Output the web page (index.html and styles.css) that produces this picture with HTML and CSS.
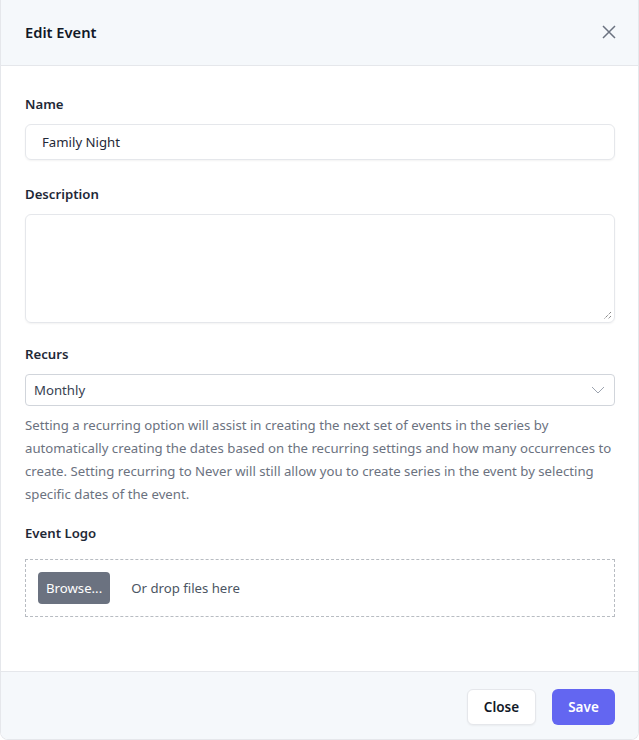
FILE: index.html
```html
<!DOCTYPE html>
<html>
<head>
<meta charset="utf-8">
<link rel="stylesheet" href="styles.css">
</head>
<body>
<div class="modal">
  <div class="modal-header">
    <h1 class="title">Edit Event</h1>
    <button class="close-x" aria-label="Close">
      <svg width="14" height="14" viewBox="0 0 14 14"><path d="M1 1L13 13M13 1L1 13" stroke="#6b7280" stroke-width="1.5" fill="none"/></svg>
    </button>
  </div>
  <div class="modal-body">
    <div class="field field-name">
      <label class="label">Name</label>
      <div class="input">Family Night</div>
    </div>
    <div class="field field-desc">
      <label class="label">Description</label>
      <div class="textarea">
        <svg class="grip" width="9" height="9" viewBox="0 0 9 9"><path d="M8 1L1 8M8 5L5 8" stroke="#555" stroke-width="1" stroke-dasharray="1 1" fill="none"/></svg>
      </div>
    </div>
    <div class="field field-recurs">
      <label class="label">Recurs</label>
      <div class="select">
        <span>Monthly</span>
        <svg width="14" height="8" viewBox="0 0 14 8"><path d="M1 1L7 7L13 1" stroke="#9ca3af" stroke-width="1" fill="none"/></svg>
      </div>
      <p class="help">Setting a recurring option will assist in creating the next set of events in the series by automatically creating the dates based on the recurring settings and how many occurrences to create. Setting recurring to Never will still allow you to create series in the event by selecting specific dates of the event.</p>
    </div>
    <div class="field">
      <label class="label label-logo">Event Logo</label>
      <div class="dropzone">
        <span class="browse">Browse...</span>
        <span class="drop-text">Or drop files here</span>
      </div>
    </div>
  </div>
  <div class="modal-footer">
    <button class="btn btn-light">Close</button>
    <button class="btn btn-primary">Save</button>
  </div>
</div>
</body>
</html>
```

FILE: styles.css
```css
* { box-sizing: border-box; }
html, body { margin: 0; padding: 0; background: #fff; }
body {
  font-family: "Noto Sans", "Open Sans", sans-serif;
  font-size: 13.2px;
  color: #1f2937;
}
.modal {
  width: 639px;
  height: 740px;
  border: 1px solid #e5e7eb;
  border-top: none;
  border-radius: 0 0 8px 8px;
  display: flex;
  flex-direction: column;
  overflow: hidden;
  background: #fff;
}
.modal-header {
  height: 66px;
  background: #f5f8fb;
  border-bottom: 1px solid #e5e7eb;
  display: flex;
  align-items: center;
  justify-content: space-between;
  padding: 0 22px 0 24px;
}
.title {
  margin: 0 0 2px;
  font-size: 14.7px;
  font-weight: 600;
  color: #111827;
}
.close-x {
  border: none;
  background: none;
  padding: 0;
  display: flex;
  margin-bottom: 2px;
}
.modal-body {
  flex: 1;
  padding: 28px 23px 0 24px;
  display: flex;
  flex-direction: column;
}
.field { display: flex; flex-direction: column; }
.field-name { margin-bottom: 24px; }
.field-desc { margin-bottom: 21px; }
.field-recurs { margin-bottom: 17px; }
.label {
  font-size: 13.2px;
  font-weight: 600;
  color: #1f2937;
  line-height: 20px;
  margin-bottom: 10px;
}
.label-logo { margin-bottom: 16px; }
.input {
  height: 36px;
  border: 1px solid #e5e7eb;
  border-radius: 6px;
  box-shadow: 0 1px 2px rgba(0,0,0,0.05);
  padding: 0 16px;
  display: flex;
  align-items: center;
  color: #1f2937;
}
.textarea {
  height: 109px;
  border: 1px solid #e5e7eb;
  border-radius: 6px;
  box-shadow: 0 1px 2px rgba(0,0,0,0.05);
  position: relative;
}
.grip { position: absolute; right: 2px; bottom: 2px; }
.select {
  height: 32px;
  border: 1px solid #d1d5db;
  border-radius: 4px;
  padding: 0 9px 0 8px;
  display: flex;
  align-items: center;
  justify-content: space-between;
  color: #374151;
}
.help {
  margin: 8px 0 0;
  font-size: 13.2px;
  line-height: 23px;
  color: #6b7280;
}
.dropzone {
  height: 58px;
  border: 1px dashed #b8bcc2;
  display: flex;
  align-items: center;
  padding: 0 12px;
  gap: 21px;
}
.browse {
  background: #6b7280;
  color: #fff;
  border-radius: 4px;
  height: 32px;
  padding: 0 8px;
  display: flex;
  align-items: center;
}
.drop-text { color: #4b5563; }
.modal-footer {
  height: 68px;
  background: #f5f8fb;
  border-top: 1px solid #e5e7eb;
  display: flex;
  align-items: center;
  justify-content: flex-end;
  gap: 16px;
  padding: 2px 23px 0 0;
}
.btn {
  font-family: inherit;
  font-size: 13.5px;
  font-weight: 600;
  height: 36px;
  border-radius: 6px;
  cursor: pointer;
}
.btn-light {
  width: 69px;
  background: #fff;
  border: 1px solid #e5e7eb;
  color: #111827;
  box-shadow: 0 1px 2px rgba(0,0,0,0.05);
}
.btn-primary {
  width: 63px;
  background: #6366f1;
  border: none;
  color: #fff;
}
```
